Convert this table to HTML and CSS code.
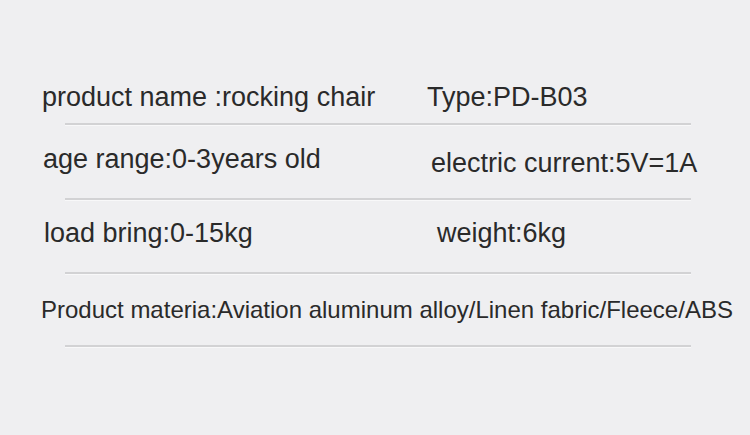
FILE: index.html
```html
<!DOCTYPE html>
<html lang="en">
<head>
<meta charset="utf-8">
<title>Product specifications</title>
<link rel="stylesheet" href="styles.css">
</head>
<body>
<main class="sheet">
  <div class="row row-1">
    <span class="cell cell-left">product name :rocking chair</span>
    <span class="cell cell-right">Type:PD-B03</span>
  </div>
  <div class="rule"></div>
  <div class="row row-2">
    <span class="cell cell-left">age range:0-3years old</span>
    <span class="cell cell-right">electric current:5V=1A</span>
  </div>
  <div class="rule"></div>
  <div class="row row-3">
    <span class="cell cell-left">load bring:0-15kg</span>
    <span class="cell cell-right">weight:6kg</span>
  </div>
  <div class="rule"></div>
  <div class="row row-4">
    <span class="cell cell-full">Product materia:Aviation aluminum alloy/Linen fabric/Fleece/ABS</span>
  </div>
  <div class="rule"></div>
</main>
</body>
</html>
```
FILE: styles.css
```css
html, body {
  margin: 0;
  padding: 0;
}

body {
  width: 750px;
  height: 435px;
  overflow: hidden;
  background: #efeff1;
  font-family: "Liberation Sans", Arial, sans-serif;
  color: #2a2a2a;
}

.sheet {
  display: flex;
  flex-direction: column;
  padding-top: 82px;
}

.row {
  display: flex;
  align-items: flex-start;
  font-size: 27px;
  line-height: 30px;
  white-space: nowrap;
}

.cell-left {
  width: 385px;
  padding-left: 42px;
}

.rule {
  margin-left: 65px;
  width: 626px;
  height: 2px;
  background: #d2d2d4;
  box-shadow: 0 1px 0 #f8f8f9;
}

.row-1 {
  margin-bottom: 11px;
}

.row-2 {
  margin-top: 19px;
  margin-bottom: 20px;
}
.row-2 .cell-left {
  padding-left: 43px;
  width: 388px;
}
.row-2 .cell-right {
  padding-top: 4px;
}

.row-3 {
  margin-top: 18px;
  margin-bottom: 24px;
}
.row-3 .cell-left {
  padding-left: 44px;
  width: 393px;
}

.row-4 {
  margin-top: 23px;
  margin-bottom: 22px;
  font-size: 24px;
  line-height: 26px;
}
.cell-full {
  padding-left: 41px;
}
```
